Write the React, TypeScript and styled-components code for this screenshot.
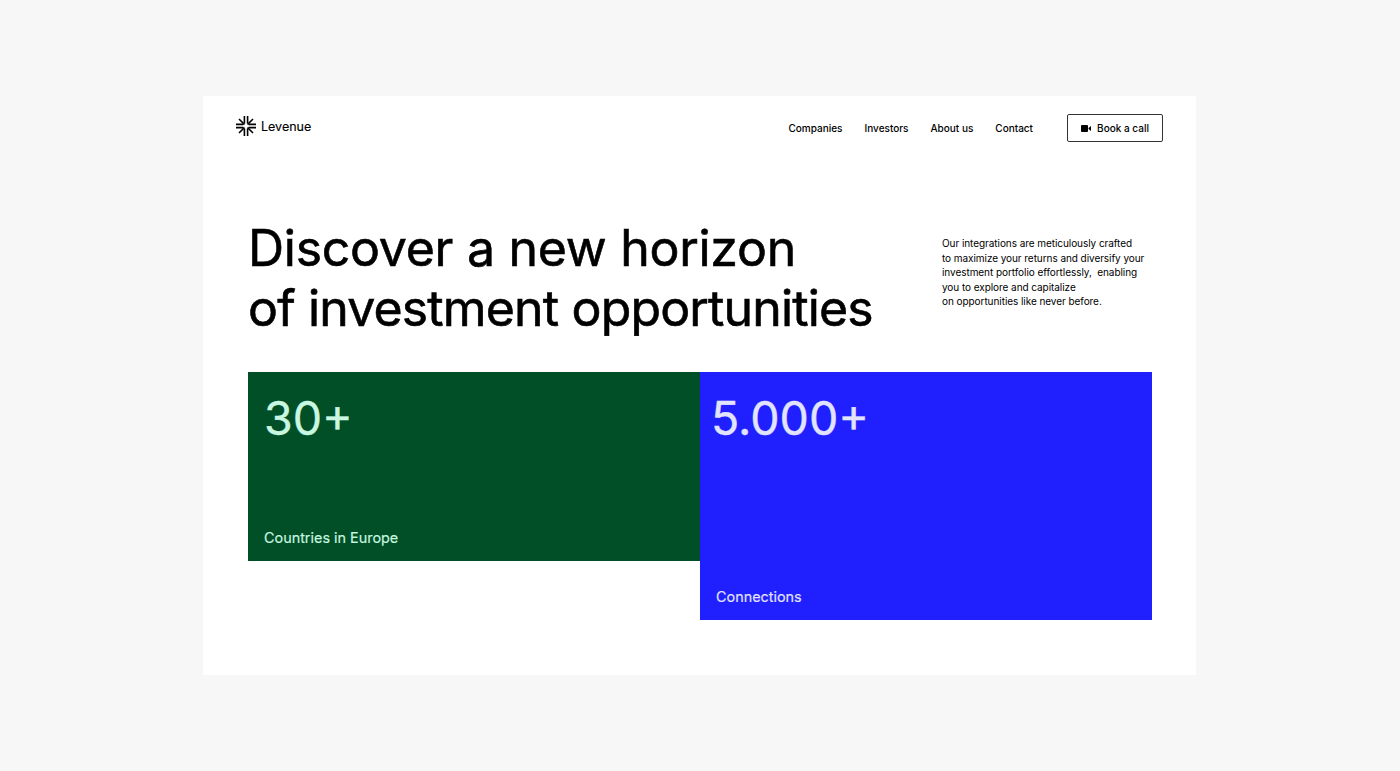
import React from 'react';
import styled, { createGlobalStyle } from 'styled-components';

const GlobalStyle = createGlobalStyle`
  html, body {
    margin: 0;
    padding: 0;
    background: #f7f7f7;
  }

  body {
    font-family: Inter, "Liberation Sans", sans-serif;
    color: #000;
  }
`;

const Page = styled.div`
  width: 1400px;
  height: 771px;
  padding: 96px 204px 96px 203px;
  box-sizing: border-box;
  overflow: hidden;
`;

const Frame = styled.main`
  height: 579px;
  background: #fff;
  padding: 18px 33px 0;
  box-sizing: border-box;
`;

const Header = styled.header`
  display: flex;
  justify-content: space-between;
  align-items: flex-start;
  height: 28px;
`;

const Brand = styled.a`
  display: flex;
  align-items: center;
  gap: 5px;
  height: 24px;
  font-size: 12.5px;
  -webkit-text-stroke: 0.15px #000;
`;

const Nav = styled.nav`
  display: flex;
  align-items: center;
  height: 28px;
`;

const NavLink = styled.a`
  font-size: 10px;
  font-weight: 500;
  margin-right: 22px;
`;

const CallButton = styled.button`
  display: flex;
  align-items: center;
  justify-content: center;
  gap: 6px;
  width: 96px;
  height: 28px;
  margin-left: 12px;
  padding: 0;
  border: 1px solid #333;
  border-radius: 2px;
  background: #fff;
  color: #000;
  font-family: inherit;
  font-size: 10px;
  font-weight: 500;
`;

const Hero = styled.section`
  display: flex;
  justify-content: space-between;
  margin-top: 76px;
  padding: 0 8px 0 12px;
`;

const Title = styled.h1`
  margin: 0;
  font-size: 50px;
  font-weight: 400;
  line-height: 60px;
  white-space: nowrap;
  -webkit-text-stroke: 0.6px #000;
`;

const TitleLine = styled.span<{ $tracking: number }>`
  display: block;
  letter-spacing: ${(p) => p.$tracking}px;
`;

const Intro = styled.p`
  width: 213px;
  margin: 18px 0 0;
  font-size: 10px;
  line-height: 14.6px;
  letter-spacing: -0.06px;
  white-space: nowrap;
`;

const Stats = styled.section`
  display: grid;
  grid-template-columns: 452px 452px;
  align-items: start;
  margin: 34px 0 0 12px;
`;

const StatCard = styled.article<{ $bg: string; $fg: string; $height: number; $numberLeft: number }>`
  display: flex;
  flex-direction: column;
  justify-content: space-between;
  height: ${(p) => p.$height}px;
  padding: 17px 16px 14px ${(p) => p.$numberLeft}px;
  box-sizing: border-box;
  background: ${(p) => p.$bg};
  color: ${(p) => p.$fg};
`;

const StatNumber = styled.div`
  font-size: 46.5px;
  line-height: 58px;
  -webkit-text-stroke: 0.4px currentColor;
`;

const StatLabel = styled.div<{ $indent: number }>`
  margin-left: ${(p) => p.$indent}px;
  font-size: 14.4px;
  line-height: 18px;
  -webkit-text-stroke: 0.15px currentColor;
`;

const Logo = () => (
  <svg width="20" height="20" viewBox="0 0 20 20" fill="none" stroke="#000" strokeWidth="1.6">
    <path d="M0 8.4H7.5M0 11.6H7.5M12.5 8.4H20M12.5 11.6H20" />
    <path d="M8.4 0V7.5M11.6 0V7.5M8.4 12.5V20M11.6 12.5V20" />
    <path d="M3 3L8.5 8.5M17 3L11.5 8.5M3 17L8.5 11.5M17 17L11.5 11.5" />
  </svg>
);

const VideoIcon = () => (
  <svg width="10" height="7" viewBox="0 0 10 7" fill="#000">
    <rect x="0" y="0" width="7" height="7" rx="1" />
    <path d="M7.5 3L10 1V6L7.5 4Z" />
  </svg>
);

const links = ['Companies', 'Investors', 'About us', 'Contact'];

export default function App() {
  return (
    <Page>
      <GlobalStyle />
      <Frame>
        <Header>
          <Brand>
            <Logo />
            Levenue
          </Brand>
          <Nav>
            {links.map((link) => (
              <NavLink key={link}>{link}</NavLink>
            ))}
            <CallButton>
              <VideoIcon />
              Book a call
            </CallButton>
          </Nav>
        </Header>
        <Hero>
          <Title>
            <TitleLine $tracking={-0.27}>Discover a new horizon</TitleLine>
            <TitleLine $tracking={-0.85}>of investment opportunities</TitleLine>
          </Title>
          <Intro>
            Our integrations are meticulously crafted
            <br />
            to maximize your returns and diversify your
            <br />
            investment portfolio effortlessly,&nbsp; enabling
            <br />
            you to explore and capitalize
            <br />
            on opportunities like never before.
          </Intro>
        </Hero>
        <Stats>
          <StatCard $bg="#004f27" $fg="#c9f7e0" $height={189} $numberLeft={16}>
            <StatNumber>30+</StatNumber>
            <StatLabel $indent={0}>Countries in Europe</StatLabel>
          </StatCard>
          <StatCard $bg="#2020ff" $fg="#e2e3ff" $height={248} $numberLeft={11}>
            <StatNumber>5.000+</StatNumber>
            <StatLabel $indent={5}>Connections</StatLabel>
          </StatCard>
        </Stats>
      </Frame>
    </Page>
  );
}
